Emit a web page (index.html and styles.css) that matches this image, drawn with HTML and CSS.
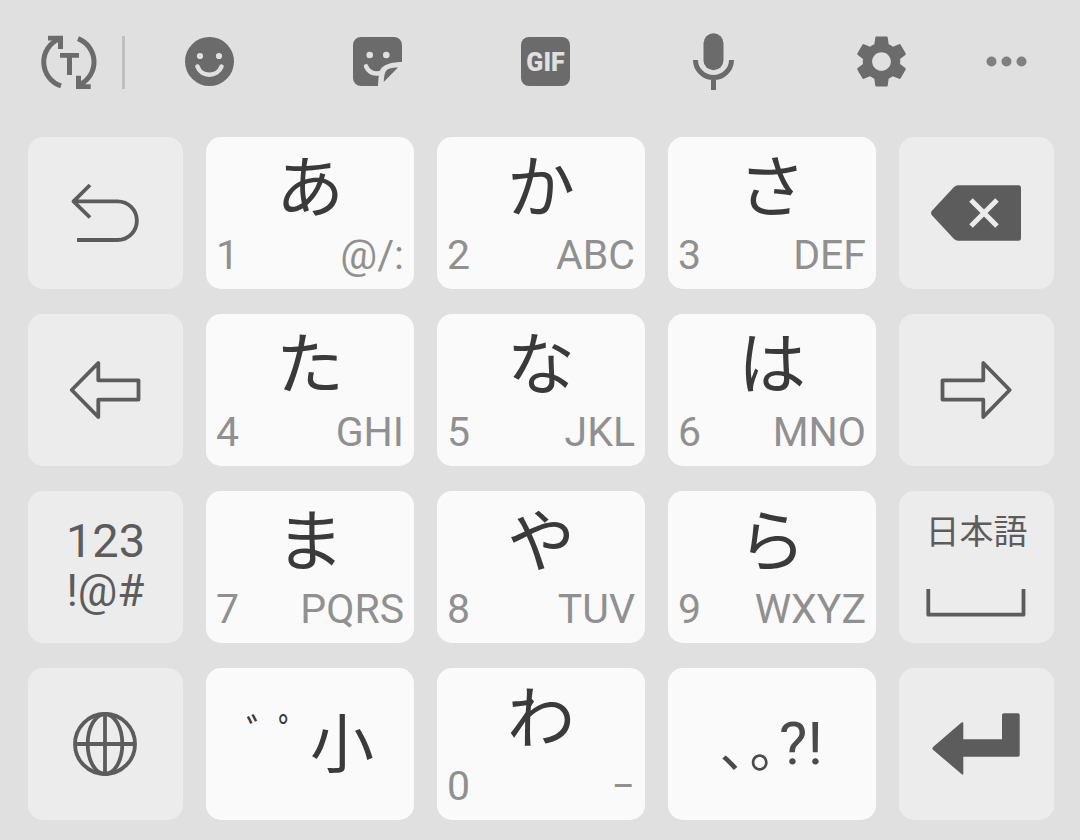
FILE: index.html
```
<!DOCTYPE html>
<html lang="ja">
<head>
    <meta charset="UTF-8">
    <meta name="viewport" content="width=device-width, initial-scale=1.0">
    <title>Japanese Keyboard</title>
    <link rel="stylesheet" href="styles.css">
</head>
<body>
    <div class="toolbar">
        <button class="tool" aria-label="Text conversion">
            <svg viewBox="0 0 60 60">
                <path class="line" d="M22 53.8A25 25 0 0 1 20 7M39 6.7A25 25 0 0 1 41 52.5"/>
                <path d="M9 3.7h15V17h-5V8.4H9zM51.7 57H37V43.7h5v8.6h9.7zM21 21h19v4.7h-7V43h-5V25.7h-7z"/>
            </svg>
        </button>
        <span class="divider"></span>
        <button class="tool" aria-label="Emoji">
            <svg viewBox="0 0 60 60">
                <circle cx="30.5" cy="29.5" r="24.5"/>
                <circle class="cut" cx="21" cy="24" r="3.1"/>
                <circle class="cut" cx="40" cy="24" r="3.1"/>
                <path class="cut-line" d="M18.5 34.5C22 45.5 38.5 45.5 42.5 34.5"/>
            </svg>
        </button>
        <button class="tool" aria-label="Stickers">
            <svg viewBox="0 0 60 60">
                <path d="M14 5h33a8 8 0 0 1 8 8v17C46 30 38 32 34 36.5C32 40 31.5 45 31 54H14a8 8 0 0 1-8-8V13a8 8 0 0 1 8-8z"/>
                <path d="M51 35.6L36.7 50C37 43 38 39.5 40.5 37.5C43 36 47 35.6 51 35.6z"/>
                <circle class="cut" cx="22.7" cy="23" r="3.3"/>
                <circle class="cut" cx="39.3" cy="23" r="3.3"/>
                <path class="cut-line" d="M19 34.3C22 41 27 42.5 34 41"/>
            </svg>
        </button>
        <button class="tool" aria-label="GIF">
            <svg viewBox="0 0 60 60">
                <rect x="6" y="5" width="49" height="49" rx="8"/>
                <text class="gif" x="30.5" y="38.5">GIF</text>
            </svg>
        </button>
        <button class="tool" aria-label="Voice input">
            <svg viewBox="0 0 60 60">
                <rect x="20.5" y="1.3" width="20" height="37" rx="10"/>
                <path class="line" d="M12.5 28a18 17.5 0 0 0 36 0M30.5 45.5V58"/>
            </svg>
        </button>
        <button class="tool" aria-label="Settings">
            <svg viewBox="0 0 60 60">
                <path transform="translate(-.7 -1.7) scale(2.6)" d="M19.14 12.94c.04-.3.06-.61.06-.94 0-.32-.02-.64-.07-.94l2.03-1.58c.18-.14.23-.41.12-.61l-1.92-3.32c-.12-.22-.37-.29-.59-.22l-2.39.96c-.5-.38-1.03-.7-1.62-.94l-.36-2.54c-.04-.24-.24-.41-.48-.41h-3.84c-.24 0-.43.17-.47.41l-.36 2.54c-.59.24-1.13.57-1.62.94l-2.39-.96c-.22-.08-.47 0-.59.22L2.74 8.87c-.12.21-.08.47.12.61l2.03 1.58c-.05.3-.09.63-.09.94s.02.64.07.94l-2.03 1.58c-.18.14-.23.41-.12.61l1.92 3.32c.12.22.37.29.59.22l2.39-.96c.5.38 1.03.7 1.62.94l.36 2.54c.05.24.24.41.48.41h3.84c.24 0 .44-.17.47-.41l.36-2.54c.59-.24 1.13-.56 1.62-.94l2.39.96c.22.08.47 0 .59-.22l1.92-3.32c.12-.22.07-.47-.12-.61l-2.01-1.58zM12 15.6c-1.98 0-3.6-1.62-3.6-3.6s1.62-3.6 3.6-3.6 3.6 1.62 3.6 3.6-1.62 3.6-3.6 3.6z"/>
            </svg>
        </button>
        <button class="tool more" aria-label="More">
            <svg viewBox="0 0 60 60">
                <circle cx="14.5" cy="29.5" r="5"/>
                <circle cx="29.5" cy="29.5" r="5"/>
                <circle cx="44.5" cy="29.5" r="5"/>
            </svg>
        </button>
    </div>

    <div class="keys">
        <button class="key fn" aria-label="Undo">
            <svg viewBox="0 0 101 100">
                <path class="stroke" d="M35 22L18.5 38.3L35 54.5M18.5 38.3H62.5a19.3 19.3 0 0 1 0 38.7H22"/>
            </svg>
        </button>
        <button class="key"><span class="kana">あ</span><span class="sub"><span>1</span><span>@/:</span></span></button>
        <button class="key"><span class="kana">か</span><span class="sub"><span>2</span><span>ABC</span></span></button>
        <button class="key"><span class="kana">さ</span><span class="sub"><span>3</span><span>DEF</span></span></button>
        <button class="key fn" aria-label="Backspace">
            <svg viewBox="0 0 101 100">
                <path d="M5.7 48L28 24Q30 22.3 32 22.3H92.5Q95 22.3 95 25V75Q95 77.7 92.5 77.7H32Q30 77.7 28 76L5.7 52Q4.5 50 5.7 48z"/>
                <path class="cross" d="M45 37L71 63M71 37L45 63"/>
            </svg>
        </button>

        <button class="key fn" aria-label="Left">
            <svg viewBox="0 0 101 100">
                <path class="stroke" d="M16.7 50L43.3 23V40.3H83.5V59.6H43.3V77z"/>
            </svg>
        </button>
        <button class="key"><span class="kana">た</span><span class="sub"><span>4</span><span>GHI</span></span></button>
        <button class="key"><span class="kana">な</span><span class="sub"><span>5</span><span>JKL</span></span></button>
        <button class="key"><span class="kana">は</span><span class="sub"><span>6</span><span>MNO</span></span></button>
        <button class="key fn" aria-label="Right">
            <svg viewBox="0 0 101 100">
                <path class="stroke" d="M83.7 50L57.3 23V40.3H16.5V59.6H57.3V77z"/>
            </svg>
        </button>

        <button class="key fn symbols"><span>123</span><span class="marks">!@#</span></button>
        <button class="key"><span class="kana">ま</span><span class="sub"><span>7</span><span>PQRS</span></span></button>
        <button class="key"><span class="kana">や</span><span class="sub"><span>8</span><span>TUV</span></span></button>
        <button class="key"><span class="kana">ら</span><span class="sub"><span>9</span><span>WXYZ</span></span></button>
        <button class="key fn space">
            <span class="lang">日本語</span>
            <svg viewBox="0 0 101 30">
                <path class="stroke" d="M2.3 2V27.7H97.5V2"/>
            </svg>
        </button>

        <button class="key fn" aria-label="Language">
            <svg viewBox="0 0 101 100">
                <g class="stroke">
                    <circle cx="50" cy="50" r="30"/>
                    <ellipse cx="50" cy="50" rx="17.3" ry="30"/>
                    <path d="M50 20V80M20 50H80"/>
                </g>
            </svg>
        </button>
        <button class="key small"><span class="dakuten">ﾞ</span><span class="dakuten">ﾟ</span><span class="kanji">小</span></button>
        <button class="key"><span class="kana">わ</span><span class="sub"><span>0</span><span>−</span></span></button>
        <button class="key punct"><span class="stop">､</span><span class="stop">｡</span><span class="ask">?!</span></button>
        <button class="key fn" aria-label="Enter">
            <svg viewBox="0 0 101 100">
                <path d="M7 53L35.5 28.5Q37.3 27.5 37.3 29.5V45.3H76V21Q76 19.3 78 19.3H92Q93.7 19.3 93.7 21V61Q93.7 62.7 92 62.7H37.3V79.5Q37.3 81.5 35.5 80L7 55.7Q5.7 54.3 7 53z"/>
            </svg>
        </button>
    </div>
</body>
</html>
```
FILE: styles.css
```
* {
    box-sizing: border-box;
}

body {
    margin: 0;
    min-height: 100vh;
    display: flex;
    flex-direction: column;
    background: #e0e0e0;
    font-family: Roboto, "Noto Sans CJK JP", sans-serif;
}

button {
    padding: 0;
    border: none;
    background: none;
    font: inherit;
    cursor: pointer;
}

svg {
    display: block;
}

/* top row of tools */
.toolbar {
    display: grid;
    grid-template-columns: 107fr 3px repeat(5, 168fr) 83fr;
    align-items: center;
    height: 124px;
    padding: 0 32px 0 15px;
}

.tool {
    display: flex;
    justify-content: center;
}

.tool svg {
    width: 60px;
    height: 60px;
    fill: #6b6b6b;
}

.tool .line {
    fill: none;
    stroke: #6b6b6b;
    stroke-width: 5;
}

.tool .cut {
    fill: #e0e0e0;
}

.tool .cut-line {
    fill: none;
    stroke: #e0e0e0;
    stroke-width: 4.5;
    stroke-linecap: round;
}

.tool .gif {
    fill: #e0e0e0;
    font-size: 25px;
    font-weight: 900;
    text-anchor: middle;
}

.more svg {
    fill: #808080;
}

.divider {
    height: 53px;
    background: #bfbfbf;
}

/* key grid */
.keys {
    flex: 1;
    display: grid;
    grid-template-columns: 155fr repeat(3, 208fr) 155fr;
    grid-auto-rows: minmax(152px, 1fr);
    gap: 25px 23px;
    padding: 13px 26px 20px 28px;
}

.key {
    display: flex;
    flex-direction: column;
    align-items: center;
    justify-content: center;
    border-radius: 15px;
    background: #fafafa;
    color: #3a3a3a;
}

.key:active {
    background: #d0d0d0;
}

.fn {
    background: #ececec;
    color: #5c5c5c;
}

.kana {
    padding-top: 4px;
    font-size: 68px;
    line-height: 84px;
}

.sub {
    align-self: stretch;
    display: flex;
    justify-content: space-between;
    padding: 0 10px;
    margin-bottom: 4px;
    font-size: 41px;
    line-height: 48px;
    color: #909090;
}

.key svg {
    width: 101px;
    fill: #5c5c5c;
}

.key .stroke {
    fill: none;
    stroke: #5c5c5c;
    stroke-width: 3.8;
    stroke-linejoin: round;
}

.key .cross {
    stroke: #ececec;
    stroke-width: 5;
}

.symbols {
    padding-bottom: 2px;
    font-size: 47px;
    line-height: 51px;
}

.marks {
    font-size: 44px;
}

.space {
    gap: 30px;
    padding-bottom: 14px;
}

.lang {
    font-family: "Noto Sans CJK JP", sans-serif;
    font-size: 34px;
    line-height: 54px;
}

/* voicing / small kana key */
.small {
    flex-direction: row;
    gap: 11px;
    font-family: "Noto Sans CJK JP", sans-serif;
}

.dakuten {
    align-self: flex-start;
    padding-top: 44px;
    font-size: 42px;
    line-height: 40px;
}

.kanji {
    padding-bottom: 10px;
    font-size: 64px;
    line-height: 64px;
}

/* punctuation key */
.punct {
    flex-direction: row;
    gap: 3px;
    color: #4a4a4a;
}

.stop {
    font-size: 52px;
}

.ask {
    padding-bottom: 2px;
    font-size: 60px;
}
```
